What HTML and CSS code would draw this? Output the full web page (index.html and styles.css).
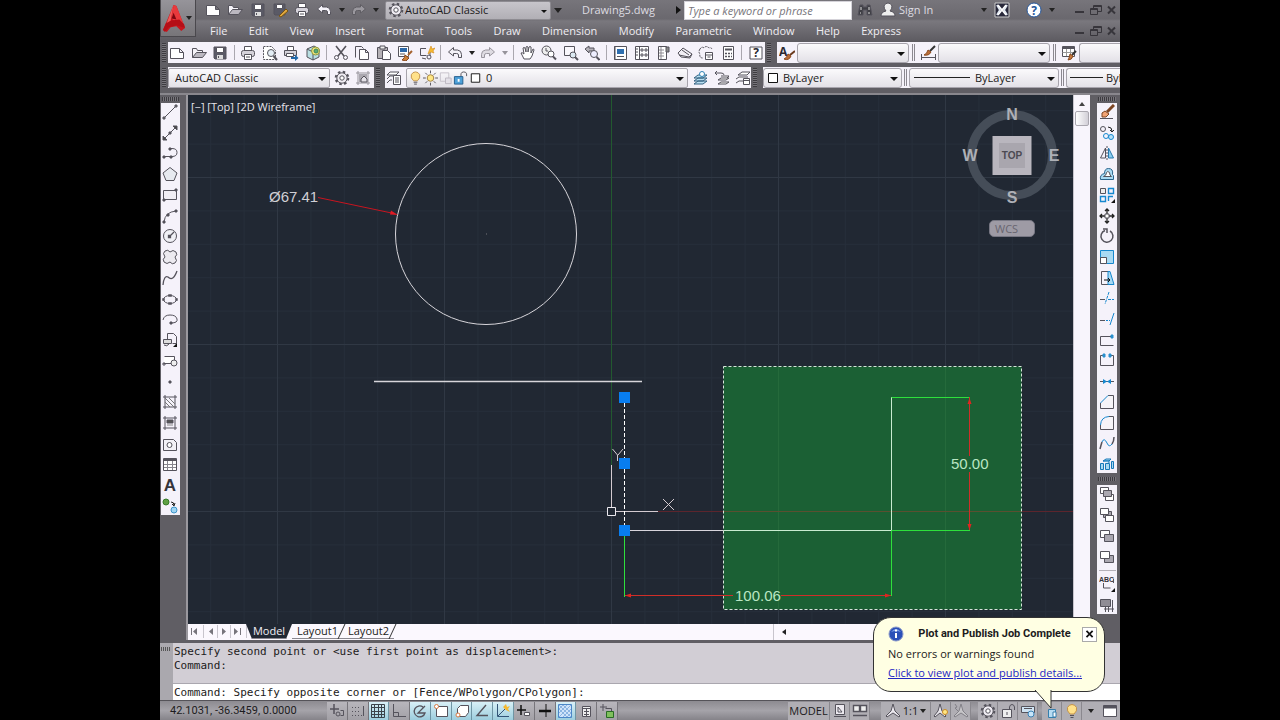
FILE: index.html
```html
<!DOCTYPE html>
<html lang="en">
<head>
<meta charset="utf-8">
<title>AutoCAD Classic - Drawing5.dwg</title>
<link rel="stylesheet" href="styles.css">
</head>
<body>
<svg class="sprite" aria-hidden="true">
  <symbol id="new" viewBox="0 0 16 16"><path d="M1.500 3.500h9l4 4v6h-13zM10.500 3.500v4h4" fill="#fff"/></symbol>
  <symbol id="open" viewBox="0 0 16 16"><path d="M1.500 12.500v-9h4l1 2h5v2" fill="#f5f3f8"/><path d="M1.500 12.500l4-5h10l-4 5z" fill="#bbb8c0"/></symbol>
  <symbol id="save" viewBox="0 0 16 16"><path d="M2 2h12v12H3l-1-1z" fill="#5a5a66"/><path d="M4.500 2.500h7v5h-7z" fill="#fff"/><path d="M5 10h6v4H5z" fill="#ddd" stroke="none"/><path d="M6.500 11v2"/></symbol>
  <symbol id="saveas" viewBox="0 0 16 16"><path d="M2 2h11v11H3l-1-1z" fill="#5a5a66"/><path d="M4.500 2.500h6v4h-6z" fill="#fff"/><path d="M7 14l7-7 2 2-7 6z" fill="#e0a840" stroke="#7a5510"/></symbol>
  <symbol id="print" viewBox="0 0 16 16"><path d="M4.500 6V1.500h7V6" fill="#fff"/><rect x="1.500" y="5.500" width="13" height="6" rx="2" fill="#d5d2da"/><path d="M4.500 9.500h7v5h-7z" fill="#fff"/><path d="M6 12h4"/></symbol>
  <symbol id="undo" viewBox="0 0 16 16"><path d="M1.500 7l5-4.500V5h4q4 .5 4 4.500v3h-3V10q0-1.500-2-1.500h-3V11z" fill="#f4f2f8"/></symbol>
  <symbol id="redo" viewBox="0 0 16 16"><path d="M14.500 7l-5-4.500V5h-4q-4 .5-4 4.500v3h3V10q0-1.500 2-1.500h3V11z" fill="#dedbe2" stroke="#99959e"/></symbol>
  <symbol id="redodim" viewBox="0 0 16 16"><path d="M14.500 7l-5-4.500V5h-4q-4 .5-4 4.500v3h3V10q0-1.500 2-1.500h3V11z" fill="#9a989e" stroke="#5f5d63"/></symbol>
  <symbol id="gear" viewBox="0 0 16 16"><circle cx="8" cy="8" r="6.300" stroke-width="2" stroke-dasharray="2.500 2.450"/><circle cx="8" cy="8" r="5.200" fill="#f0edf3"/><circle cx="8" cy="8" r="2.200" fill="#fff"/></symbol>
  <symbol id="binoc" viewBox="0 0 16 16"><path d="M3 3h3v2h4V3h3l2 10h-5V8H6v5H1z" fill="#3f3f45"/><path d="M3 11h1M11 11h2M4 5v3M12 5v3" stroke="#ddd"/></symbol>
  <symbol id="user" viewBox="0 0 16 16"><path d="M1 14q0-4 5-5Q4 7 4 4q1-3 4-3t4 3q0 3-2 5 5 1 5 5z" fill="#eee"/></symbol>
  <symbol id="xchg" viewBox="0 0 16 16"><path d="M1 1h14v14H1z" fill="#28283a" stroke="#ccc"/><path d="M3 3l3 5-3 5M13 3l-3 5 3 5" stroke="#dfe6f0" stroke-width="2"/><path d="M4 3l8 10M12 3L4 13" stroke="#fff" stroke-width="1.500"/></symbol>
  <symbol id="help" viewBox="0 0 16 16"><circle cx="8" cy="8" r="7" fill="#fff" stroke="#24569b"/><text x="8" y="12.500" text-anchor="middle" class="help-mark">?</text></symbol>
  <symbol id="min" viewBox="0 0 16 16"><path d="M3 10h9" stroke-width="2"/></symbol>
  <symbol id="rest" viewBox="0 0 16 16"><path d="M2.500 6.500h7v6h-7zM5.500 6V3.500h8v6H10"/><path d="M2.500 7.500h7M5.500 4.500h8"/></symbol>
  <symbol id="close" viewBox="0 0 16 16"><path d="M4 4.500l7 7M11 4.500l-7 7" stroke-width="2"/></symbol>
  <symbol id="preview" viewBox="0 0 16 16"><path d="M1.500 1.500h8l4 4v9h-12z" fill="#fff" stroke-dasharray="2 1"/><circle cx="9" cy="8" r="3.500" fill="#e4eef6"/><path d="M11.500 11l3.500 4" stroke-width="2"/></symbol>
  <symbol id="publish" viewBox="0 0 16 16"><path d="M4.500 5V1.500h6V5" fill="#fff"/><path d="M1.500 5.500h12v5h-12z" fill="#d5d2da"/><path d="M3.500 8.500h7v3h-7z" fill="#fff"/><path d="M8 12h4v-2.500l3.500 3.500-3.500 3v-2H8z" fill="#2067a8" stroke="none"/></symbol>
  <symbol id="dwf" viewBox="0 0 16 16"><path d="M2 4l7-3 5 3v8l-6 3-6-3z" fill="#b9dfe3"/><path d="M2 4l6 3 6-3M8 7v8"/><circle cx="10.500" cy="6" r="4" fill="#f3e27a" stroke="#8d9a40"/><circle cx="11" cy="6" r="2" fill="#5bab76" stroke="#3c8a5c"/></symbol>
  <symbol id="cut" viewBox="0 0 16 16"><path d="M3 1l8 10M13 1L5 11" stroke-width="1.600"/><circle cx="3.500" cy="12.500" r="2"/><circle cx="12.500" cy="12.500" r="2"/></symbol>
  <symbol id="copy" viewBox="0 0 16 16"><path d="M1.500 12.500v-11h6l2 2"/><path d="M5.500 4.500h6l3 3v7h-9zM11.500 4.500v3h3" fill="#fff"/></symbol>
  <symbol id="paste" viewBox="0 0 16 16"><path d="M1.500 2.500h10v11h-10z" fill="#b5b1b6"/><path d="M4 1h5v3H4z" fill="#eee"/><path d="M6.500 5.500h5l3 3v6h-8z" fill="#fff"/></symbol>
  <symbol id="match" viewBox="0 0 16 16"><path d="M1.500 1.500h10v10h-10z" fill="#fff"/><path d="M3 3h7v4H3z" fill="#2c68a9" stroke="none"/><path d="M3 9h5"/><path d="M15 6l-4 4" stroke="#a4622e" stroke-width="2"/><path d="M8 10l4 3-3 3-4-1q3-2 3-5z" fill="#cc7f36" stroke="#8b4a1d"/></symbol>
  <symbol id="block" viewBox="0 0 16 16"><path d="M7 3.500H1.500v7h6M11 7v4"/><circle cx="10" cy="12" r="2"/><path d="M3 13l4 1"/><path d="M10 6l2-5 1 3 3-1-2 3 1 2-3-1-3 2z" fill="#f5b931" stroke="#d18a19" stroke-width=".6"/></symbol>
  <symbol id="pan" viewBox="0 0 16 16"><path d="M4 14L1 8q1-1 3 1L3 3q1-1 2 0l1 4V2q1-1 2 0v5l1-5q1-1 2 0v6l2-4q1 0 1 1l-2 6-2 3z" fill="#fff"/></symbol>
  <symbol id="zoomrt" viewBox="0 0 16 16"><circle cx="5.500" cy="5.500" r="4.500" fill="#eee"/><path d="M5 3v3h2"/><circle cx="10" cy="9" r="3" fill="#fff"/><path d="M12 11.500l3 3" stroke-width="2"/></symbol>
  <symbol id="zoomwin" viewBox="0 0 16 16"><path d="M1.500 1.500h10v9h-10z" fill="#f9f7fc"/><circle cx="10" cy="10" r="3" fill="#dce9f2"/><path d="M12 12l3 3" stroke-width="2"/></symbol>
  <symbol id="zoomprev" viewBox="0 0 16 16"><path d="M1 4l4-3v2h5v3H5v2z" fill="#b4b1b8"/><circle cx="10" cy="9" r="3.500" fill="#eef"/><path d="M12.500 12l3 3" stroke-width="2"/></symbol>
  <symbol id="prop" viewBox="0 0 16 16"><path d="M2.500 1.500h12v13h-12z" fill="#fff"/><path d="M5 4h7v5H5z" fill="#2f6fb0" stroke="none"/><path d="M5 11.500h7M3 1v14"/></symbol>
  <symbol id="design" viewBox="0 0 16 16"><path d="M1.500 1.500h13v13h-13z" fill="#fff"/><path d="M5.500 2v12M7 4h2v2H7zM11 4h2v2h-2zM7 9h2v2H7zM11 9h2v2h-2zM2 4h2M2 7h2M2 10h2"/></symbol>
  <symbol id="palette" viewBox="0 0 16 16"><path d="M3.500 1.500h8v13h-8z" fill="#fff"/><path d="M6 2v12M4 5h5M4 8h5M4 11h5" stroke="#8c8991"/><path d="M11 2h3v5h-3z" fill="#888"/></symbol>
  <symbol id="sheet" viewBox="0 0 16 16"><path d="M1 8l5-5 9 6-2 4-9-1zM2 10l10 2 3-3M5 5l7 5" fill="#f2eff5"/></symbol>
  <symbol id="markup" viewBox="0 0 16 16"><path d="M2 4q2-3 4-1 2-3 5 0 3-1 3 2M2 4q-2 3 0 5-1 4 3 4" stroke-dasharray="2 1"/><path d="M7.500 7.500h7v7h-7z" fill="#fff"/><path d="M8 10h6M9.500 12h3"/></symbol>
  <symbol id="calc" viewBox="0 0 16 16"><path d="M3.500 1.500h10v13h-10z" fill="#fff"/><path d="M5 4.500h7" stroke-width="2"/><path d="M5 8.500h7M5 11.500h7" stroke-dasharray="2 1" stroke-width="1.500"/></symbol>
  <symbol id="helpsq" viewBox="0 0 16 16"><path d="M2 2h12v12H2z" fill="#fff"/><text x="8" y="12" text-anchor="middle" class="help-mark dark">?</text></symbol>
  <symbol id="tstyle" viewBox="0 0 16 16"><text x="0" y="11" class="help-mark dark">A</text><path d="M16 6l-5 4" stroke="#6a3a1e" stroke-width="2"/><path d="M9 9l3 2q-2 5-7 3 3-1 4-5z" fill="#b96d38" stroke="#8b4a1d"/></symbol>
  <symbol id="dstyle" viewBox="0 0 16 16"><path d="M1.500 9v6M15.500 9v6M2 12.500h13"/><path d="M15 1l-5 5" stroke="#333" stroke-width="2"/><path d="M8 5l3 2q-2 4-7 3 3-1 4-5z" fill="#b96d38" stroke="#8b4a1d"/></symbol>
  <symbol id="tabstyle" viewBox="0 0 16 16"><path d="M1.500 1.500h12v10h-12z" fill="#fff"/><path d="M1.500 3h12" stroke-width="2"/><path d="M1.500 7.500h12M5.500 4v7M9.500 4v7" stroke="#999"/><path d="M15 6l-4 4" stroke="#333" stroke-width="2"/><path d="M9 9l3 2q-1 4-5 4 1-1 2-6z" fill="#c87b40" stroke="#8b4a1d"/></symbol>
  <symbol id="wsset" viewBox="0 0 16 16"><path d="M1 3h14M1 13h14M3 1v14M13 1v14" stroke="#96939b"/><path d="M4 4h8v8H4z" fill="#aaa7af" stroke="none"/><path d="M6 12V9l3-3 3 3v3z" fill="#e4e1e8"/></symbol>
  <symbol id="layers" viewBox="0 0 16 16"><path d="M1 5l3-3h9l-3 3zM1 9l3-3h3M1 13l3-3h2" fill="#fff"/><path d="M7.500 5.500h7v9h-7z" fill="#fff"/><path d="M9 8h4M9 10h4M9 12h4"/></symbol>
  <symbol id="bulb" viewBox="0 0 16 16"><path d="M6 11Q2.500 8 3.500 4.500 5 1.500 8 1.500t4.500 3Q13.500 8 10 11z" fill="#ffe18a" stroke="#c2924a"/><path d="M6 12.500h4M6.500 14.500h3"/></symbol>
  <symbol id="sun" viewBox="0 0 16 16"><path d="M8 0v3M8 13v3M0 8h3M13 8h3M2.500 2.500l2 2M11.500 11.500l2 2M13.500 2.500l-2 2M4.500 11.500l-2 2"/><circle cx="8" cy="8" r="3.500" fill="#ffe784" stroke="#a08040"/></symbol>
  <symbol id="freeze" viewBox="0 0 16 16"><path d="M2.500 2.500h9v9h-9z" stroke="#c5c1ca"/><path d="M8 8h6v6H8z" fill="#e4e1e8" stroke="#bcb8c1"/></symbol>
  <symbol id="lock" viewBox="0 0 16 16"><path d="M8.500 7V3.500q.5-2 3-2t3 2V6"/><path d="M1.500 6.500h9v8h-9z" fill="#4da0d8" stroke="#235d8c"/><path d="M6 9v3" stroke="#fff" stroke-width="2"/></symbol>
  <symbol id="swatch" viewBox="0 0 16 16"><path d="M3.500 3.500h9v9h-9z" fill="#fff" stroke="#111"/></symbol>
  <symbol id="lay1" viewBox="0 0 16 16"><path d="M1 14l4-3h9l-4 3zM1 11l4-3h9l-4 3zM1 8l4-3h9l-4 3z" fill="#b9def0" stroke="#356382"/><circle cx="9" cy="4" r="2.500" fill="#fff" stroke="#2f81b5"/></symbol>
  <symbol id="lay2" viewBox="0 0 16 16"><path d="M4 14l3-2h8l-3 2zM4 10l3-2h8l-3 2zM7 6h8l-2 2" fill="#fff"/><path d="M1 3h6q3 0 3 2M3 1L1 3l2 2"/></symbol>
  <symbol id="lay3" viewBox="0 0 16 16"><path d="M1 13l3-2h4M1 9l3-2h9M3 5l4-3h8l-3 3z" fill="#fff"/><path d="M8.500 8.500h6v6h-6zM9 10.500h5" fill="#fff"/></symbol>

  <symbol id="line" viewBox="0 0 16 16"><path d="M2 14L14 2"/><path d="M1 13h2v2H1zM13 1h2v2h-2z" fill="#777"/></symbol>
  <symbol id="xline" viewBox="0 0 16 16"><path d="M2 14L14 2"/><path d="M1 11v4h4zM11 1h4v4z" fill="#444"/><path d="M7 7h2v2H7z" fill="#555"/></symbol>
  <symbol id="pline" viewBox="0 0 16 16"><path d="M1 11.500h9q5 0 5-4t-5-4H8"/><path d="M1 11h2v2H1zM8 11h2v2H8zM7 3h2v2H7z" fill="#555"/></symbol>
  <symbol id="polygon" viewBox="0 0 16 16"><path d="M8 1.500l7 5.500-3 7.500H4L1 7z" fill="#e7eaf0"/></symbol>
  <symbol id="rect" viewBox="0 0 16 16"><path d="M1.500 3.500h13v9h-13z" fill="#f0edf3"/><path d="M1 12h2v2H1zM13 2h2v2h-2z" fill="#555"/></symbol>
  <symbol id="arc" viewBox="0 0 16 16"><path d="M2 14Q3 4 14 3"/><path d="M1 13h2v2H1zM5 6h2v2H5zM13 2h2v2h-2z" fill="#555"/></symbol>
  <symbol id="circle" viewBox="0 0 16 16"><circle cx="8" cy="8" r="6.500" fill="#f0f0f5"/><path d="M7 9l5-5M6.500 7.500h2v2h-2z" stroke-width="1.300"/></symbol>
  <symbol id="cloud" viewBox="0 0 16 16"><path d="M3 8Q0 4 3 2q3-2 5 1 3-3 6 0 2 3-1 5 3 4 0 6-3 2-5-1-3 3-6 0-2-3 1-5z" fill="#eceaf0"/></symbol>
  <symbol id="spline" viewBox="0 0 16 16"><path d="M1 15Q2 5 6 7q5 5 9-6" stroke-width="1.300"/></symbol>
  <symbol id="ellipse" viewBox="0 0 16 16"><ellipse cx="8" cy="8.500" rx="6.500" ry="4"/><path d="M1 8h1v1H1zM14 8h1v1h-1zM7 4h2v1H7zM7 12h2v1H7z" stroke-width="1.500"/></symbol>
  <symbol id="earc" viewBox="0 0 16 16"><path d="M1 9q1-5 7-5t7 4-6 4"/><path d="M8 11h2v2H8z" fill="#555"/></symbol>
  <symbol id="insert" viewBox="0 0 16 16"><path d="M5.500 7V1.500h6l3 3v7h-4"/><path d="M1.500 7.500h8v4h-8zM7 12q-2 3-5 1" fill="#ddd"/><path d="M15 15h-4l4-4z" fill="#111" stroke="none"/></symbol>
  <symbol id="mkblock" viewBox="0 0 16 16"><path d="M2.500 3.500h10v7h-11" fill="#fff"/><circle cx="12" cy="10" r="3" fill="#eee"/><path d="M1 10h2v2H1z"/></symbol>
  <symbol id="point" viewBox="0 0 16 16"><path d="M7 7h2v2H7z" fill="#555"/></symbol>
  <symbol id="hatch" viewBox="0 0 16 16"><path d="M1 3h14M1 13h14M3 1v14M13 1v14"/><path d="M3 8l5 5M3 4l9 9M7 4l6 6" stroke="#777"/></symbol>
  <symbol id="grad" viewBox="0 0 16 16"><path d="M1 3h14M1 13h14M3 1v14M13 1v14"/><path d="M5 5h6v3H5z" fill="#555"/><path d="M5 10h6" stroke="#888"/></symbol>
  <symbol id="region" viewBox="0 0 16 16"><path d="M1.500 3.500h10l3 3v8h-13z" fill="#f3f1f6"/><circle cx="7.500" cy="9" r="2.500" fill="#fff"/></symbol>
  <symbol id="table" viewBox="0 0 16 16"><path d="M1.500 2.500h13v12h-13z" fill="#fff"/><path d="M1.500 4h13" stroke-width="2"/><path d="M2 8.500h12M2 11.500h12M5.500 5v9M10.500 5v9" stroke="#88868e"/></symbol>
  <symbol id="mtext" viewBox="0 0 16 16"><text x="8" y="14" text-anchor="middle" class="bigA">A</text></symbol>
  <symbol id="addsel" viewBox="0 0 16 16"><circle cx="4" cy="4" r="3" fill="#5fa044" stroke="#377b28"/><path d="M9 4q3 0 3 3M10 6l2 2 1-3" stroke="#222"/><circle cx="12" cy="12" r="3" fill="#9ed5f4" stroke="#3f95c9"/></symbol>

  <symbol id="erase" viewBox="0 0 16 16"><path d="M1 14.500h13"/><path d="M15 1l-7 7" stroke="#7c4522" stroke-width="3"/><path d="M3 9l3-2 4 3-3 3H3z" fill="#f1a273" stroke="#7c4522"/></symbol>
  <symbol id="cpy" viewBox="0 0 16 16"><circle cx="4" cy="4" r="2.500"/><path d="M9 2q4 0 4 4M11 5l2 2 2-2" stroke="#222"/><g stroke="#1688cf"><circle cx="7" cy="11" r="2.500"/><circle cx="12" cy="12" r="2.500" fill="#b9e1f7"/></g></symbol>
  <symbol id="mirror" viewBox="0 0 16 16"><path d="M6.500 3v10h-5z"/><path d="M9.500 3v10h5z" fill="#8bcdf0" stroke="#2679ae"/><path d="M8 1v14" stroke-dasharray="2 1"/></symbol>
  <symbol id="offset" viewBox="0 0 16 16"><path d="M1.500 13.500q-1-5 4-6 0-5 4-5 5 0 4 6l1 1v4z" fill="#a9daf3" stroke="#2a648c"/><path d="M4.500 10.500h8q-2-1-2-4-2-2-3 0 0 3-3 4z" fill="#fff"/></symbol>
  <symbol id="array" viewBox="0 0 16 16"><path d="M1.500 1.500h5v5h-5z" fill="#eee"/><path d="M9.500 1.500h5v5h-5zM1.500 9.500h5v5h-5zM14 9.500H9.500V14" stroke="#1688cf" stroke-width="1.400"/><path d="M16 16h-4l4-4z" fill="#111" stroke="none"/></symbol>
  <symbol id="move" viewBox="0 0 16 16"><path d="M8 1v14M1 8h14M6 3l2-2 2 2M6 13l2 2 2-2M3 6L1 8l2 2M13 6l2 2-2 2" stroke="#222" stroke-width="1.300"/><path d="M6 6h4v4H6z" fill="#fff"/></symbol>
  <symbol id="rotate" viewBox="0 0 16 16"><path d="M6 2.500a6 6 0 1 0 5 .5" stroke-width="1.500"/><path d="M4 1h4v4" stroke-width="1.500"/></symbol>
  <symbol id="scale" viewBox="0 0 16 16"><path d="M1.500 1.500h13v13h-13z" fill="#a9daf3" stroke="#1688cf"/><path d="M1.500 8.500h6v6h-6z" fill="#fff"/></symbol>
  <symbol id="stretch" viewBox="0 0 16 16"><path d="M9 1.500H2.500v13H9"/><path d="M9 1.500h2l4 13H9z" fill="#a9daf3" stroke="#1688cf"/><path d="M5 10h6M9 8l2 2-2 2" stroke="#111"/></symbol>
  <symbol id="trim" viewBox="0 0 16 16"><path d="M1 9.500h5"/><path d="M10 2L6 14M9 9.500h6" stroke="#1688cf" stroke-dasharray="3 1"/></symbol>
  <symbol id="extend" viewBox="0 0 16 16"><path d="M1 9.500h5"/><path d="M7 9.500h4" stroke-dasharray="2 1" stroke="#1688cf"/><path d="M15 2l-4 12" stroke="#1688cf"/></symbol>
  <symbol id="brkpt" viewBox="0 0 16 16"><path d="M1.500 13.500v-9h11M1.500 13.500h13"/><path d="M12 3h2v3h-2z" fill="#2b90ce" stroke="#2b90ce"/></symbol>
  <symbol id="brk" viewBox="0 0 16 16"><path d="M5 3.500H1.500v10h13v-10H11"/><path d="M4 2h2v3H4zM10 2h2v3h-2z" fill="#2b90ce" stroke="#2b90ce"/></symbol>
  <symbol id="join" viewBox="0 0 16 16"><path d="M1 8.500h14"/><path d="M4 6l4 2.500L4 11zM12 6L8 8.500l4 2.500z" fill="#1688cf" stroke="none"/></symbol>
  <symbol id="chamfer" viewBox="0 0 16 16"><path d="M1.500 9v5.500h13v-13H9" fill="#f6f4f8"/><path d="M1.500 9L9 1.500" stroke="#1688cf"/></symbol>
  <symbol id="fillet" viewBox="0 0 16 16"><path d="M1.500 10v4.500h13v-13H10" fill="#f6f4f8"/><path d="M1.500 10Q2 2 10 1.500" stroke="#1688cf"/></symbol>
  <symbol id="blend" viewBox="0 0 16 16"><path d="M1 14q1-4 2-7M13 9q2-3 2-7" stroke-width="1.500"/><path d="M3 7q2-5 5 1 2 5 5 1" stroke="#1688cf"/></symbol>
  <symbol id="explode" viewBox="0 0 16 16"><g fill="#a9daf3" stroke="#1679b9"><path d="M4 5l3-2h5l-2 2zM1.500 7.500h3v6h-3zM6.500 7.500h4v6h-4zM12.500 5.500h2v7h-2z"/><path d="M4 5h6v2"/></g></symbol>
  <symbol id="front" viewBox="0 0 16 16"><path d="M1.500 1.500h8v6h-8zM6.500 8.500h8v6h-8z" fill="#fff"/><path d="M4.500 4.500h8v6h-8z" fill="#aaa7b0"/></symbol>
  <symbol id="back" viewBox="0 0 16 16"><path d="M4.500 4.500h8v6h-8z" fill="#aaa7b0"/><path d="M1.500 1.500h8v6h-8zM6.500 8.500h8v6h-8z" fill="#fff"/></symbol>
  <symbol id="above" viewBox="0 0 16 16"><path d="M1.500 2.500h9v7h-9z" fill="#fff"/><path d="M5.500 6.500h9v7h-9z" fill="#aaa7b0"/></symbol>
  <symbol id="under" viewBox="0 0 16 16"><path d="M5.500 6.500h9v7h-9z" fill="#aaa7b0"/><path d="M1.500 2.500h9v7h-9z" fill="#fff"/></symbol>
  <symbol id="abc" viewBox="0 0 16 16"><text x="0" y="6" class="tiny">ABC</text><path d="M14.500 3v4M4.500 7v5h7"/><path d="M16 16h-4l4-4z" fill="#111" stroke="none"/></symbol>
  <symbol id="hatchback" viewBox="0 0 16 16"><path d="M1.500 2.500h10v7h-10z" fill="#8f8c95"/><path d="M13.500 3v12M5 12h10M6.500 10v5M9.500 10v5"/></symbol>

  <symbol id="infer" viewBox="0 0 16 16"><path d="M5 1v10M1 6h9" stroke-width="1.500"/><circle cx="9" cy="11" r="2"/><path d="M11.500 7.500h3v5h-3"/></symbol>
  <symbol id="snap" viewBox="0 0 16 16"><path d="M2 4.500h9M2 8.500h9M2 12.500h11" stroke-dasharray="1 2"/><path d="M13.500 3v10"/></symbol>
  <symbol id="grid" viewBox="0 0 16 16"><path d="M1.500 1.500h13v13h-13zM1 4.500h14M1 8.500h14M1 11.500h14M4.500 1v14M8.500 1v14M11.500 1v14" stroke="#3a424a"/></symbol>
  <symbol id="ortho" viewBox="0 0 16 16"><path d="M2.500 1v12.500H15M3 9.500h4.500v4"/></symbol>
  <symbol id="polar" viewBox="0 0 16 16"><path d="M11 4a5.500 5.500 0 1 0 2 6H6l7-7" stroke-width="1.300"/></symbol>
  <symbol id="osnap" viewBox="0 0 16 16"><path d="M3.500 3.500h11v10h-11z" fill="#fff"/><circle cx="3.500" cy="3.500" r="2" fill="#fff" stroke="#d77942"/></symbol>
  <symbol id="osnap3" viewBox="0 0 16 16"><path d="M3.500 5.500l3-3h8v7l-3 4h-8z" fill="#fff"/><circle cx="4" cy="12" r="2" fill="#fff" stroke="#d77942"/></symbol>
  <symbol id="otrack" viewBox="0 0 16 16"><path d="M12 2L3 12.500h11" stroke-width="1.400"/></symbol>
  <symbol id="ducs" viewBox="0 0 16 16"><path d="M2.500 1v12.500H14M3 13L12 4" stroke="#357"/><path d="M8 4l3-3 1 3 3-1-2 3 2 3-4-2z" fill="#f5b931" stroke="none"/></symbol>
  <symbol id="dyn" viewBox="0 0 16 16"><path d="M5 2v10M1 7h9" stroke-width="1.500" stroke="#111"/><path d="M8.500 9.500h5v3h-5z" fill="#fff"/></symbol>
  <symbol id="lwt" viewBox="0 0 16 16"><path d="M9 1v13" stroke="#111"/><path d="M2 8h12" stroke="#111" stroke-width="2.500"/></symbol>
  <symbol id="trans" viewBox="0 0 16 16"><path d="M1.500 1.500h13v13h-13z" fill="#cfe3fa" stroke="#4b86c8"/><path d="M2 6l4-4M2 10l8-8M2 14L14 2M6 14l8-8M10 14l4-4M2 6l8 8M2 2l12 12M6 2l8 8" stroke="#6c9fd6" stroke-width=".7"/></symbol>
  <symbol id="qp" viewBox="0 0 16 16"><path d="M4.500 3.500h8v10h-8z" fill="#eee"/><path d="M5 5.500h7M6 8.500h5M6 11.500h5M8.500 6v7"/></symbol>
  <symbol id="cycle" viewBox="0 0 16 16"><path d="M4 1v7M1 4h7"/><path d="M6.500 5.500h6v6"/><path d="M7.500 8.500h7v6h-7z" fill="#7fc05d" stroke="#286c24"/></symbol>
  <symbol id="paper" viewBox="0 0 16 16"><path d="M2 13.500h12M3.500 1.500h9v10h-9z" fill="#ece9ef"/><path d="M6 4v5h4z"/></symbol>
  <symbol id="views" viewBox="0 0 16 16"><path d="M1.500 2.500h6v6h-6zM8.500 2.500h6v6h-6zM1 12.500h14" fill="#eee" stroke-width="1.400"/></symbol>
  <symbol id="anno" viewBox="0 0 16 16"><path d="M8 1l2 7 5 5-1 1-6-4-6 4-1-1 5-5z" fill="#e9e6ec"/></symbol>
  <symbol id="annovis" viewBox="0 0 16 16"><path d="M7 1l2 7 4 5-1 1-5-4-5 4-1-1 4-5z" fill="#e9e6ec"/><circle cx="12" cy="9" r="2.500" fill="#ffe784" stroke="#c98a26"/></symbol>
  <symbol id="annoauto" viewBox="0 0 16 16"><g opacity=".5"><path d="M8 1l2 7 5 5-1 1-6-4-6 4-1-1 5-5z" fill="#ddd"/><path d="M2 1l2 3-2 1 3 3"/></g></symbol>
  <symbol id="unlock" viewBox="0 0 16 16"><path d="M9.500 7V4q.5-2.500 2.500-2.500T14.500 4v3"/><path d="M2.500 6.500h9v8h-9z" fill="#eee"/><path d="M7 9v3"/></symbol>
  <symbol id="hw" viewBox="0 0 16 16"><path d="M1.500 3.500h13v6h-13z" fill="#cfe3f2"/><path d="M4 5.500h8"/><circle cx="11" cy="11" r="3" fill="#c8e6fa" stroke="#3b82b5"/></symbol>
  <symbol id="tray" viewBox="0 0 16 16"><path d="M4.500 6.500h7v8h-7z" fill="#b6dcf3" stroke="#367fac"/><path d="M9 9h3v5H9z" fill="#fff" stroke="#367fac"/></symbol>
  <symbol id="clean" viewBox="0 0 16 16"><path d="M1.500 2.500h13v11h-13z" fill="#fff"/><path d="M1.500 4h13" stroke-width="3"/></symbol>
</svg>

<div class="app">
  <header class="top">
    <button class="appmenu" aria-label="Application menu">
      <svg class="logo" viewBox="0 0 24 30"><path d="M11 1l3 1 9 23-4 3-5-5-6 1-4 5-4-2z" fill="#c9151d"/><path d="M11 1l-2 14 7 6 7 4L14 2z" fill="#e8393c"/><path d="M11 1l-8 21 5-5z" fill="#ef5c5a"/><path d="M0 27l3-7 6-3 8-1 5 5 1 4-9-3-8 2-4 5z" fill="#b50f17"/><path d="M11 9l-2 6 5 1z" fill="#7d0710"/></svg><i class="caret"></i>
    </button>
    <div class="top-rows">
      <div class="title">
        <div class="quick">
          <button aria-label="New"><svg><use href="#new"/></svg></button>
          <button aria-label="Open"><svg><use href="#open"/></svg></button>
          <button aria-label="Save"><svg><use href="#save"/></svg></button>
          <button aria-label="Save as"><svg><use href="#saveas"/></svg></button>
          <button aria-label="Plot"><svg><use href="#print"/></svg></button>
          <button aria-label="Undo"><svg><use href="#undo"/></svg></button>
          <i class="caret"></i>
          <button aria-label="Redo"><svg><use href="#redodim"/></svg></button>
          <i class="caret"></i>
        </div>
        <div class="combo ws-top"><svg><use href="#gear"/></svg><select aria-label="Workspace"><option>AutoCAD Classic</option></select></div>
        <i class="caret big"></i>
        <span class="doc">Drawing5.dwg</span>
        <i class="tri"></i>
        <input class="search" type="text" placeholder="Type a keyword or phrase" aria-label="Search">
        <div class="sign">
          <button aria-label="Search help"><svg><use href="#binoc"/></svg></button>
          <button class="signin"><svg><use href="#user"/></svg>Sign In</button>
        </div>
        <div class="info">
          <i class="caret"></i>
          <button aria-label="Exchange"><svg><use href="#xchg"/></svg></button>
          <button aria-label="Help"><svg><use href="#help"/></svg></button>
          <i class="caret"></i>
        </div>
        <div class="win">
          <button aria-label="Minimize"><svg><use href="#min"/></svg></button><button aria-label="Restore"><svg><use href="#rest"/></svg></button><button aria-label="Close"><svg><use href="#close"/></svg></button>
        </div>
      </div>
      <div class="menurow">
        <nav class="menu">
          <button>File</button><button>Edit</button><button>View</button><button>Insert</button><button>Format</button><button>Tools</button><button>Draw</button><button>Dimension</button><button>Modify</button><button>Parametric</button><button>Window</button><button>Help</button><button>Express</button>
        </nav>
        <div class="win">
          <button aria-label="Minimize drawing"><svg><use href="#min"/></svg></button><button aria-label="Restore drawing"><svg><use href="#rest"/></svg></button><button aria-label="Close drawing"><svg><use href="#close"/></svg></button>
        </div>
      </div>
    </div>
  </header>

  <div class="bar">
    <i class="grip"></i>
    <div class="panel standard">
      <button aria-label="New"><svg><use href="#new"/></svg></button>
      <button aria-label="Open"><svg><use href="#open"/></svg></button>
      <button aria-label="Save"><svg><use href="#save"/></svg></button>
      <i class="sep"></i>
      <button aria-label="Plot"><svg><use href="#print"/></svg></button>
      <button aria-label="Plot preview"><svg><use href="#preview"/></svg></button>
      <button aria-label="Publish"><svg><use href="#publish"/></svg></button>
      <button aria-label="3D DWF"><svg><use href="#dwf"/></svg></button>
      <i class="sep"></i>
      <button aria-label="Cut"><svg><use href="#cut"/></svg></button>
      <button aria-label="Copy"><svg><use href="#copy"/></svg></button>
      <button aria-label="Paste"><svg><use href="#paste"/></svg></button>
      <button aria-label="Match properties"><svg><use href="#match"/></svg></button>
      <button aria-label="Block editor"><svg><use href="#block"/></svg></button>
      <i class="sep"></i>
      <button aria-label="Undo"><svg><use href="#undo"/></svg></button>
      <i class="caret"></i>
      <button aria-label="Redo"><svg><use href="#redo"/></svg></button>
      <i class="caret pale"></i>
      <i class="sep"></i>
      <button aria-label="Pan"><svg><use href="#pan"/></svg></button>
      <button aria-label="Zoom realtime"><svg><use href="#zoomrt"/></svg></button>
      <button aria-label="Zoom window"><svg><use href="#zoomwin"/></svg></button>
      <button aria-label="Zoom previous"><svg><use href="#zoomprev"/></svg></button>
      <i class="sep"></i>
      <button aria-label="Properties"><svg><use href="#prop"/></svg></button>
      <button aria-label="DesignCenter"><svg><use href="#design"/></svg></button>
      <button aria-label="Tool palettes"><svg><use href="#palette"/></svg></button>
      <button aria-label="Sheet set manager"><svg><use href="#sheet"/></svg></button>
      <button aria-label="Markup set manager"><svg><use href="#markup"/></svg></button>
      <button aria-label="Calculator"><svg><use href="#calc"/></svg></button>
      <i class="sep"></i>
      <button aria-label="Help"><svg><use href="#helpsq"/></svg></button>
    </div>
    <i class="grip"></i>
    <div class="panel styles">
      <button aria-label="Text style"><svg><use href="#tstyle"/></svg></button>
      <div class="combo"><select aria-label="Text style name"><option></option></select></div>
      <i class="lines"></i>
      <button aria-label="Dimension style"><svg><use href="#dstyle"/></svg></button>
      <div class="combo"><select aria-label="Dimension style name"><option></option></select></div>
      <i class="lines"></i>
      <button aria-label="Table style"><svg><use href="#tabstyle"/></svg></button>
      <div class="combo cut"></div>
    </div>
  </div>

  <div class="bar second">
    <i class="grip"></i>
    <div class="panel workspace">
      <div class="combo"><select aria-label="Workspace name"><option>AutoCAD Classic</option></select></div>
      <button aria-label="Workspace settings"><svg><use href="#gear"/></svg></button>
      <button aria-label="My workspace"><svg><use href="#wsset"/></svg></button>
    </div>
    <i class="grip"></i>
    <div class="panel layer">
      <button aria-label="Layer properties"><svg><use href="#layers"/></svg></button>
      <div class="combo"><svg><use href="#bulb"/></svg><svg><use href="#sun"/></svg><svg><use href="#freeze"/></svg><svg><use href="#lock"/></svg><svg><use href="#swatch"/></svg><select aria-label="Layer"><option>0</option></select></div>
      <button aria-label="Make layer current"><svg><use href="#lay1"/></svg></button>
      <button aria-label="Layer previous"><svg><use href="#lay2"/></svg></button>
      <button aria-label="Layer states"><svg><use href="#lay3"/></svg></button>
    </div>
    <i class="grip"></i>
    <div class="panel props">
      <div class="combo color"><svg><use href="#swatch"/></svg><select aria-label="Color"><option>ByLayer</option></select></div>
      <i class="lines"></i>
      <div class="combo ltype"><i class="sample"></i><select aria-label="Linetype"><option>ByLayer</option></select></div>
      <i class="lines"></i>
      <div class="combo cut"><i class="sample short"></i><span>ByLayer</span></div>
    </div>
  </div>

  <main class="work">
    <aside class="side left">
      <i class="hgrip"></i>
      <div class="tools draw">
        <button aria-label="Line"><svg><use href="#line"/></svg></button>
        <button aria-label="Construction line"><svg><use href="#xline"/></svg></button>
        <button aria-label="Polyline"><svg><use href="#pline"/></svg></button>
        <button aria-label="Polygon"><svg><use href="#polygon"/></svg></button>
        <button aria-label="Rectangle"><svg><use href="#rect"/></svg></button>
        <button aria-label="Arc"><svg><use href="#arc"/></svg></button>
        <button aria-label="Circle"><svg><use href="#circle"/></svg></button>
        <button aria-label="Revision cloud"><svg><use href="#cloud"/></svg></button>
        <button aria-label="Spline"><svg><use href="#spline"/></svg></button>
        <button aria-label="Ellipse"><svg><use href="#ellipse"/></svg></button>
        <button aria-label="Ellipse arc"><svg><use href="#earc"/></svg></button>
        <button aria-label="Insert block"><svg><use href="#insert"/></svg></button>
        <button aria-label="Make block"><svg><use href="#mkblock"/></svg></button>
        <button aria-label="Point"><svg><use href="#point"/></svg></button>
        <button aria-label="Hatch"><svg><use href="#hatch"/></svg></button>
        <button aria-label="Gradient"><svg><use href="#grad"/></svg></button>
        <button aria-label="Region"><svg><use href="#region"/></svg></button>
        <button aria-label="Table"><svg><use href="#table"/></svg></button>
        <button aria-label="Multiline text"><svg><use href="#mtext"/></svg></button>
        <button aria-label="Add selected"><svg><use href="#addsel"/></svg></button>
      </div>
    </aside>

    <section class="drawing">
      <div class="view">
        <svg class="canvas" role="img" aria-label="Drawing area">
          <defs>
            <pattern id="minor" width="33.400" height="33.400" patternUnits="userSpaceOnUse" x="611" y="511"><path d="M.5 0v33.400M0 .5h33.400" stroke="#262e3a"/></pattern>
            <pattern id="major" width="167" height="167" patternUnits="userSpaceOnUse" x="611" y="511"><path d="M.5 0v167M0 .5h167" stroke="#303844"/></pattern>
          </defs>
          <g transform="translate(-188 -95)" fill="none">
            <rect x="188" y="95" width="3000" height="2000" fill="url(#minor)"/>
            <rect x="188" y="95" width="3000" height="2000" fill="url(#major)"/>
            <path d="M611.500 95v416" stroke="#22592f"/>
            <path d="M611 511.500h3000" stroke="#5c252d"/>
            <rect x="723.500" y="366.500" width="298" height="243" fill="#1b6034"/>
            <path d="M778.500 367v242M945.500 367v242" stroke="#256a3b"/>
            <path d="M724 511.500h297" stroke="#5a5030"/>
            <rect x="723.500" y="366.500" width="298" height="243" stroke="#d6e6da" stroke-dasharray="3 2"/>
            <circle cx="486" cy="234" r="90.500" stroke="#d7d5da"/>
            <path d="M486 234h1" stroke="#77757a"/>
            <path d="M374 381.500h268" stroke="#d7d5da" stroke-width="1.500"/>
            <path d="M318 197.500l76 16" stroke="#c8141f"/>
            <path d="M398 215l-8-.5 1-4z" fill="#e01a24"/>
            <path d="M611.500 465v46.500H658M612.500 449l5 6v6M623 449l-5 6M663 499l11 11M674 499l-11 11" stroke="#d4cbd1"/>
            <path d="M607.500 507.500h8v8h-8z" fill="#212833" stroke="#ebe8ee"/>
            <path d="M624 530.500h99.500" stroke="#d8d5dc"/>
            <path d="M723.500 530.500h168V397" stroke="#c9ecd0"/>
            <path d="M624.500 397v134" stroke="#fff" stroke-dasharray="4 2"/>
            <path d="M624.500 532v65M891.500 397.500H970M891.500 530.500H970M891.500 531v65" stroke="#2ee03c"/>
            <path d="M625 595.500h108M781 595.500h110M969.500 397v59M969.500 472v58" stroke="#d02e28"/>
            <path d="M625 595.500l6-2v4zM891 595.500l-6-2v4zM969.500 398l-2 6h4zM969.500 530l-2-6h4z" fill="#e22420"/>
            <path d="M619 392h11v11h-11zM619 458h11v11h-11zM619 525h11v11h-11z" fill="#087df0"/>
            <g class="dims"><text x="269" y="202">Ø67.41</text><g class="picked"><text x="951" y="469">50.00</text><text x="735" y="601">100.06</text></g></g>
          </g>
        </svg>
        <span class="viewlabel">[−] [Top] [2D Wireframe]</span>
        <div class="cube">
          <svg viewBox="0 0 100 104"><circle cx="50" cy="52" r="40.500" fill="none" stroke="#454d58" stroke-width="9"/><rect x="30.500" y="33" width="39" height="39" fill="#b9b6be"/><rect x="37" y="40" width="26" height="25" fill="#a9a6ae"/><g class="cubetext"><text x="50" y="17">N</text><text x="50" y="100">S</text><text x="8" y="58">W</text><text x="92" y="58">E</text><text x="50" y="56" class="face">TOP</text></g></svg>
          <button class="wcs">WCS</button>
        </div>
        <div class="vscroll"><i class="up"></i><i class="thumb"></i></div>
      </div>
      <div class="tabs">
        <svg class="nav" viewBox="0 0 64 15"><path d="M15.500 1v13M29.500 1v13M42.500 1v13M58.500 1v13" stroke="#c8c5cd"/><path d="M9 4v7l-4-3.500zM25 4v7l-4-3.500zM34 4v7l4-3.500zM46 4v7l4-3.500z" fill="#77757c"/><path d="M3.500 4v7M52.500 4v7" stroke="#77757c"/></svg>
        <button class="tab on">Model</button><button class="tab">Layout1</button><button class="tab">Layout2</button>
        <div class="hscroll"><i class="tri back"></i></div>
      </div>
    </section>

    <aside class="side right">
      <i class="hgrip"></i>
      <div class="tools modify">
        <button aria-label="Erase"><svg><use href="#erase"/></svg></button>
        <button aria-label="Copy objects"><svg><use href="#cpy"/></svg></button>
        <button aria-label="Mirror"><svg><use href="#mirror"/></svg></button>
        <button aria-label="Offset"><svg><use href="#offset"/></svg></button>
        <button aria-label="Array"><svg><use href="#array"/></svg></button>
        <button aria-label="Move"><svg><use href="#move"/></svg></button>
        <button aria-label="Rotate"><svg><use href="#rotate"/></svg></button>
        <button aria-label="Scale"><svg><use href="#scale"/></svg></button>
        <button aria-label="Stretch"><svg><use href="#stretch"/></svg></button>
        <button aria-label="Trim"><svg><use href="#trim"/></svg></button>
        <button aria-label="Extend"><svg><use href="#extend"/></svg></button>
        <button aria-label="Break at point"><svg><use href="#brkpt"/></svg></button>
        <button aria-label="Break"><svg><use href="#brk"/></svg></button>
        <button aria-label="Join"><svg><use href="#join"/></svg></button>
        <button aria-label="Chamfer"><svg><use href="#chamfer"/></svg></button>
        <button aria-label="Fillet"><svg><use href="#fillet"/></svg></button>
        <button aria-label="Blend curves"><svg><use href="#blend"/></svg></button>
        <button aria-label="Explode"><svg><use href="#explode"/></svg></button>
      </div>
      <i class="hgrip mid"></i>
      <div class="tools order">
        <button aria-label="Bring to front"><svg><use href="#front"/></svg></button>
        <button aria-label="Send to back"><svg><use href="#back"/></svg></button>
        <button aria-label="Bring above objects"><svg><use href="#above"/></svg></button>
        <button aria-label="Send under objects"><svg><use href="#under"/></svg></button>
        <i class="hsep"></i>
        <button aria-label="Bring annotations to front"><svg><use href="#abc"/></svg></button>
        <button aria-label="Send hatches to back"><svg><use href="#hatchback"/></svg></button>
      </div>
    </aside>
  </main>

  <section class="command">
    <i class="handle"></i>
    <div class="lines-box">
      <div class="history">Specify second point or &lt;use first point as displacement&gt;:<br>Command:</div>
      <input type="text" aria-label="Command line" value="Command: Specify opposite corner or [Fence/WPolygon/CPolygon]:">
    </div>
  </section>

  <footer class="status">
    <span class="coords">42.1031, -36.3459, 0.0000</span>
    <div class="toggles">
      <button aria-label="Infer constraints"><svg><use href="#infer"/></svg></button>
      <button aria-label="Snap"><svg><use href="#snap"/></svg></button>
      <button class="on" aria-label="Grid"><svg><use href="#grid"/></svg></button>
      <button aria-label="Ortho"><svg><use href="#ortho"/></svg></button>
      <button class="on" aria-label="Polar tracking"><svg><use href="#polar"/></svg></button>
      <button class="on" aria-label="Object snap"><svg><use href="#osnap"/></svg></button>
      <button class="on" aria-label="3D object snap"><svg><use href="#osnap3"/></svg></button>
      <button class="on" aria-label="Object snap tracking"><svg><use href="#otrack"/></svg></button>
      <button class="on" aria-label="Dynamic UCS"><svg><use href="#ducs"/></svg></button>
      <button aria-label="Dynamic input"><svg><use href="#dyn"/></svg></button>
      <button aria-label="Lineweight"><svg><use href="#lwt"/></svg></button>
      <button class="on" aria-label="Transparency"><svg><use href="#trans"/></svg></button>
      <button aria-label="Quick properties"><svg><use href="#qp"/></svg></button>
      <button aria-label="Selection cycling"><svg><use href="#cycle"/></svg></button>
    </div>
    <div class="tray model">
      <button>MODEL</button>
      <button aria-label="Quick view layouts"><svg><use href="#paper"/></svg></button>
      <button aria-label="Quick view drawings"><svg><use href="#views"/></svg></button>
    </div>
    <div class="tray annotation">
      <button class="scale"><svg><use href="#anno"/></svg>1:1<i class="caret"></i></button>
      <button aria-label="Annotation visibility"><svg><use href="#annovis"/></svg></button>
      <button aria-label="Auto scale"><svg><use href="#annoauto"/></svg></button>
    </div>
    <div class="tray setup">
      <button aria-label="Workspace switching"><svg><use href="#gear"/></svg></button>
      <button aria-label="Lock toolbars"><svg><use href="#unlock"/></svg></button>
      <button aria-label="Hardware acceleration"><svg><use href="#hw"/></svg></button>
    </div>
    <div class="tray last">
      <button aria-label="Plot notification"><svg><use href="#tray"/></svg></button>
      <button aria-label="Isolate objects"><svg><use href="#bulb"/></svg></button>
      <i class="caret"></i>
      <button aria-label="Clean screen"><svg><use href="#clean"/></svg></button>
    </div>
  </footer>

  <div class="balloon" role="status">
    <div class="bhead">
      <svg viewBox="0 0 16 16"><circle cx="8" cy="8" r="7" fill="#2b50b8" stroke="#8a98c8"/><path d="M3 6q5-6 10 0-5-2-10 0z" fill="#7da0ea" stroke="none"/><path d="M8 3.500v2M8 7v5" stroke="#fff" stroke-width="2"/></svg>
      <strong>Plot and Publish Job Complete</strong>
      <button aria-label="Close notification"><svg><use href="#close"/></svg></button>
    </div>
    <p>No errors or warnings found</p>
    <a href="#">Click to view plot and publish details...</a>
    <svg class="tail" viewBox="0 0 20 20"><path d="M1 0l16 18V0" fill="#ffffe3" stroke="#333"/></svg>
  </div>
</div>
</body>
</html>
```
FILE: styles.css
```css
* { box-sizing: border-box; }
body { margin: 0; background: #000; font: 11px/16px "Open Sans", "Noto Sans", sans-serif; color: #1c1b20; }
button, input, select { font: inherit; color: inherit; margin: 0; padding: 0; border: 0; background: none; }
button { display: flex; align-items: center; justify-content: center; flex: none; }
svg { width: 16px; height: 16px; flex: none; display: block; fill: none; stroke: #55535c; }
i { flex: none; }
.sprite { display: none; }
.help-mark { font: bold 12px "Open Sans", sans-serif; fill: #24569b; stroke: none; }
.help-mark.dark { fill: #2b2a33; }
.bigA { font: bold 17px "Liberation Sans", sans-serif; fill: #35343b; stroke: none; }
.tiny { font: bold 7px "Liberation Sans", sans-serif; fill: #35343b; stroke: none; }

.app { position: relative; width: 75%; height: 100vh; min-height: 720px; margin: 0 auto; display: flex; flex-direction: column; overflow: hidden; background: #605e64; }
.caret { width: 0; height: 0; border: 3px solid transparent; border-top: 4px solid #222; border-bottom: 0; }
.caret.big { border-width: 4px; border-bottom: 0; border-top: 5px solid #222; }
.caret.pale { border-top-color: #96939b; }
.tri { width: 0; height: 0; border: 4px solid transparent; border-left: 5px solid #111; border-right: 0; }
.tri.back { border: 3px solid transparent; border-right: 4px solid #222; border-left: 0; }

.top { display: flex; height: 42px; background: linear-gradient(#77757b, #6a686e 45%, #7a787e 50%, #5c5a60); }
.appmenu { width: 36px; height: 37px; justify-content: space-between; padding: 0 3px 0 2px; background: linear-gradient(#96949a, #777579); border: 1px solid #4a484d; border-top: 0; }
.logo { width: 23px; height: 29px; stroke: none; }
.top-rows { flex: 1; min-width: 0; }
.title { display: flex; align-items: center; height: 20px; }
.quick { display: flex; align-items: center; justify-content: space-between; width: 174px; margin: 0 6px 0 9px; }
.combo { position: relative; display: flex; align-items: center; height: 20px; min-width: 0; padding: 0 4px 0 6px; background: linear-gradient(#fbfafc, #e3e1e7); border: 1px solid #a7a4ac; border-radius: 2px; }
.combo::after { content: ""; position: absolute; right: 3px; top: 8px; border: 4px solid transparent; border-top: 4px solid #111; border-bottom: 0; pointer-events: none; }
.combo select { appearance: none; flex: 1; min-width: 0; outline: 0; }
.ws-top { width: 166px; height: 19px; padding-left: 2px; margin-right: 3px; background: linear-gradient(#c7c5cb, #b1afb5); border-color: #8d8b91; }
.ws-top svg { margin-right: 1px; }
.ws-top::after { border-width: 3px; border-bottom: 0; }
.doc { width: 114px; padding-left: 20px; color: #dedce2; white-space: nowrap; }
.search { width: 168px; height: 19px; margin-left: 3px; padding: 0 3px; background: #fff; border: 1px solid #d5d3d9; font-style: italic; }
.search::placeholder { color: #77757c; opacity: 1; }
.sign { display: flex; gap: 7px; margin-left: 5px; }
.signin { gap: 3px; color: #dedce2; white-space: nowrap; }
.info { display: flex; align-items: center; justify-content: space-between; width: 74px; margin-left: auto; }
.info button:nth-of-type(2) { margin-left: 9px; }
.win { display: flex; margin: 0 0 0 17px; }
.win svg { stroke: #37353b; }
.menurow { display: flex; align-items: center; height: 22px; }
.menu { display: flex; justify-content: space-between; width: 691px; margin-left: 14px; color: #f0eef3; }
.menurow .win { margin-left: auto; }

.bar { display: flex; height: 21px; }
.bar.second { margin: 4px 0 5px; }
.grip { width: 4px; margin: 1px 2px; background: repeating-linear-gradient(#3d3b40 0 1px, #77757b 1px 2px); }
.panel { display: flex; align-items: center; background: #f5f2fa; }
.standard { width: 597px; flex: none; justify-content: space-between; padding: 0 1px; }
.sep { width: 1px; height: 15px; background: #aaa7af; }
.styles { flex: 1; min-width: 0; margin-left: 4px; }
.styles > button { width: 20px; }
.styles .combo { width: 112px; flex: none; border-radius: 3px; }
.lines { width: 3px; height: 17px; margin: 0 2px; border: solid #8b8890; border-width: 0 1px; }
.styles .lines { margin: 0 3px; }
.panel .combo.cut { flex: 1 1 0; width: auto; border-right: 0; border-radius: 3px 0 0 3px; overflow: hidden; }
.combo.cut::after { display: none; }
.combo.cut span { flex: none; }
.workspace, .layer { flex: none; gap: 5px; }
.workspace { width: 206px; }
.workspace .combo { width: 162px; }
.workspace .combo + button { margin-left: -1px; }
.layer { width: 366px; padding-left: 1px; margin-left: 3px; }
.layer .combo { flex: 1; padding-left: 1px; }
.layer .combo svg:last-of-type { margin-right: 3px; }
.layer .combo svg { width: 15px; }
.layer button:first-child { margin-right: -1px; }
.props { flex: 1; min-width: 0; margin-left: 4px; }
.props .combo { flex: none; border-radius: 3px; }
.props .combo.color { width: 139px; padding-left: 1px; }
.props .combo.color svg { margin-right: 2px; }
.props .combo.ltype { width: 150px; padding-left: 4px; }
.sample { width: 56px; height: 1px; background: #222; margin-right: 5px; }
.props .combo.cut { padding-left: 3px; }
.sample.short { width: 33px; margin-right: 3px; }

.work { flex: 1; min-height: 0; display: flex; border-top: 2px solid #89878d; }
.side { display: flex; flex-direction: column; flex: none; }
.side.left { width: 26px; padding: 0 6px 0 1px; }
.side.right { width: 30px; padding: 0 3px 0 7px; }
.hgrip { height: 4px; margin: 2px 1px; background: repeating-linear-gradient(90deg, #3d3b40 0 1px, #77757b 1px 2px); }
.hgrip.mid { margin: 4px 1px; }
.tools { display: flex; flex-direction: column; align-items: center; justify-content: space-between; padding: 1px 0; background: #f5f2fa; }
.left .tools { padding-right: 1px; }
.draw { height: 412px; }
.modify { height: 370px; }
.order { height: 129px; }
.hsep { width: 17px; height: 1px; background: #b4b1b9; }
.drawing { flex: 1; min-width: 0; display: flex; flex-direction: column; border-left: 2px solid #9a989e; }
.view { position: relative; flex: 1; min-height: 0; display: flex; justify-content: flex-end; background: #212833; overflow: hidden; }
.canvas { position: absolute; left: 0; top: 0; width: 100%; height: 100%; stroke: none; }
.dims { font: 16px "Liberation Sans", Arial, sans-serif; font-size: 15px; fill: #d0cfd5; stroke: none; }
.picked { fill: #b9e6c3; }
.viewlabel { position: absolute; left: 3px; top: 4px; color: #e6e4ea; }
.cube { position: relative; width: 100px; margin: 8px 11px 0 0; display: flex; flex-direction: column; align-items: center; }
.cube svg { width: 100px; height: 104px; stroke: none; }
.cubetext { font: bold 16px "Liberation Sans", sans-serif; fill: #aeb0b6; text-anchor: middle; }
.face { font-size: 10px; fill: #4c4a52; }
.wcs { width: 46px; height: 17px; margin-top: 13px; padding-left: 5px; justify-content: flex-start; border: 1px solid #777783; border-radius: 5px; background: #9e9ba5; color: #686570; }
.vscroll { position: relative; width: 17px; display: flex; flex-direction: column; align-items: center; background: #f8f5fc; border-left: 1px solid #c8c5cd; }
.up { width: 0; height: 0; margin: 7px 0 5px; border: 3px solid transparent; border-bottom: 4px solid #444; border-top: 0; }
.thumb { width: 14px; height: 15px; border: 1px solid #aaa7af; border-radius: 2px; background: linear-gradient(90deg, #fff, #d2cfd7); }
.tabs { display: flex; height: 16px; background: #fbf8fe; }
.nav { width: 64px; height: 15px; margin-right: -6px; stroke: none; }
.tab { height: 15px; width: 51px; border-bottom: 1px solid #8b8890; position: relative; }
.tab::after { content: ""; position: absolute; right: 1px; top: 0; height: 15px; border-right: 1px solid #333; transform: skewX(-25deg); }
.tab.on { width: 46px; color: #f0eef3; background: #212833; clip-path: polygon(0 0, 100% 0, 87% 100%, 13% 100%); }
.hscroll { margin-left: auto; width: 317px; display: flex; align-items: center; padding-left: 8px; border-left: 1px solid #c8c5cd; }

.command { display: flex; margin-top: 3px; height: 57px; flex: none; background: #d2ced5; font: 11px/14px "DejaVu Sans Mono", "Liberation Mono", monospace; }
.handle { width: 13px; background: repeating-linear-gradient(90deg, #555 0 1px, transparent 1px 2px) 1px 4px / 10px 4px no-repeat #aaa8ae; }
.lines-box { flex: 1; min-width: 0; display: flex; flex-direction: column; }
.history { flex: 1; padding: 2px 1px 0; }
.command input { height: 17px; padding: 0 1px; background: #fff; border-top: 1px solid #aaa7af; outline: 0; }

.status { display: flex; align-items: center; height: 20px; flex: none; background: linear-gradient(#8d8b91, #a5a3a9 50%, #858389); border-top: 1px solid #555359; }
.coords { width: 167px; padding-left: 10px; flex: none; font-family: Roboto, "Open Sans", sans-serif; }
.toggles { display: flex; width: 291px; flex: none; }
.toggles button { flex: 1; height: 18px; border-right: 1px solid #77757b; background: linear-gradient(#b8b6bc, #a2a0a6); }
.toggles .on { background: linear-gradient(#d8f0f7, #9ccddd); border-color: #6f95a4; }
.tray { display: flex; align-items: center; background: #b0aeb4; }
.tray button { width: 20px; height: 18px; border-right: 1px solid #8a888e; }
.tray.model { margin-left: auto; }
.tray.model button:first-child { width: 42px; }
.tray.annotation { margin-left: 11px; }
.tray .scale { width: 50px; gap: 2px; }
.tray.setup { margin-left: 7px; }
.tray.last { margin-left: 4px; }
.tray.last .caret { margin: 0 6px; }
.tray.last button:last-child { border: 0; }

.balloon { position: absolute; right: 15px; bottom: 28px; width: 232px; height: 75px; padding: 7px 7px 0 14px; background: #ffffe3; border: 1px solid #333; border-radius: 18px; white-space: nowrap; }
.bhead { display: flex; align-items: center; height: 18px; }
.bhead strong { flex: 1; padding-left: 3px; font: bold 11px/16px Roboto, "Open Sans", sans-serif; text-align: center; }
.bhead button { width: 15px; height: 15px; background: #fff; border: 1px solid #aaa; }
.bhead button svg { stroke: #111; width: 14px; height: 14px; }
.balloon p { margin: 3px 0 4px; line-height: 15px; }
.balloon a { display: block; color: #2326c4; line-height: 16px; }
.tail { position: absolute; left: 160px; top: 72px; width: 20px; height: 20px; }
```
